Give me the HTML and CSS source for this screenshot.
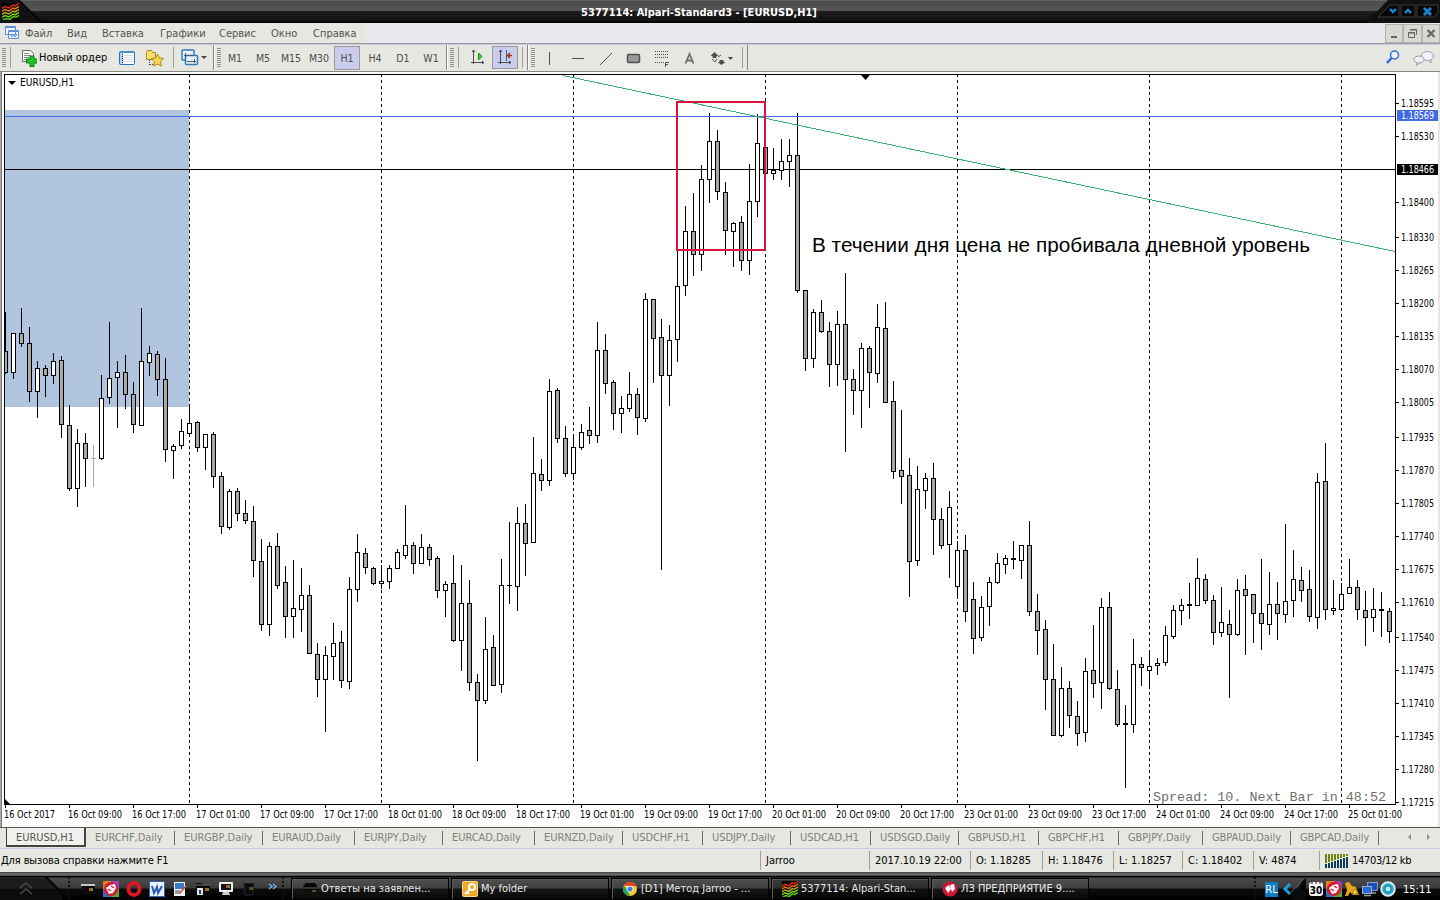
FILE: index.html
```
<!DOCTYPE html>
<html lang="ru">
<head>
    <meta charset="UTF-8">
    <title>5377114: Alpari-Standard3 - [EURUSD,H1]</title>
    <link rel="stylesheet" href="styles.css">
</head>
<body>

    <!-- Общие значки -->
    <svg class="defs">
        <symbol id="logo" viewBox="0 0 17 17">
            <rect width="17" height="17" fill="#060606"/>
            <g fill="none" stroke-width="1.5">
                <path stroke="#e8281e" d="M0 5.500l3-2 4 1.500 4-3 2 .8L17 .5"/>
                <path stroke="#f07818" d="M0 8.500l3-2 4 1.500 4-3 2 .8 4-2.500"/>
                <path stroke="#b8b020" d="M0 11.500l3-2 4 1.500 4-3 2 .8 4-2.500"/>
                <path stroke="#78d818" d="M0 14.500l3-2 4 1.500 4-3 2 .8 4-2.500"/>
                <path stroke="#58c810" d="M1 17l3-1.500 4 1 3-3 3 .8 3-2"/>
            </g>
        </symbol>
        <symbol id="redball" viewBox="0 0 16 16">
            <circle cx="8" cy="8" r="7.500" fill="#d01838"/>
            <path d="M3 7l4-3 2 4-3 4zM8 4l4-1 1 5-3 3z" fill="#fff"/>
        </symbol>
        <symbol id="redsquare" viewBox="0 0 16 16">
            <path d="M0 0h8v8H0z" fill="#e08020"/>
            <path d="M8 0h8v8H8z" fill="#a040b0"/>
            <path d="M0 8h8v8H0z" fill="#3070c8"/>
            <path d="M8 8h8v8H8z" fill="#58a838"/>
            <circle cx="8" cy="8" r="7" fill="#d81830"/>
            <path d="M3 7l4-3 5-1 1 4-3 5-4 1z" fill="#fff"/>
            <path d="M5 8l3 2M8 5l3 2" stroke="#d81830" stroke-width="1.500"/>
        </symbol>
        <symbol id="drive" viewBox="0 0 16 16">
            <path d="M1 5l3-3h9l2 3v4H1z" fill="#080808"/>
            <path d="M1 6h14v2H1z" fill="#333"/>
            <path d="M3 9h12v4H4z" fill="#111"/>
            <path d="M10 9l2 0v2h-2z" fill="#8a3018"/><path d="M12 9l2 0v2h-2z" fill="#38701c"/>
        </symbol>
    </svg>

    <!-- Заголовок окна -->
    <div class="titlebar">
        <svg class="title-left" width="42" height="23">
            <path d="M0 0h19l22 23H0z" fill="#111"/>
            <path d="M19 0l22 22" stroke="#000" stroke-width="1.500"/>
            <use href="#logo" x="2" y="3" width="17" height="17"/>
        </svg>
        <div class="title-text">5377114: Alpari-Standard3 - [EURUSD,H1]</div>
        <svg class="title-right" width="74" height="23">
            <path d="M0 23L22 0h52v23z" fill="#101010"/>
            <path d="M12 17L24 5h9v12zM35 5h14v12H35zM51 5h21v8l-4 4H51z" fill="#050505" stroke="#3c3c3c"/>
            <path d="M24 9l3 3 3-3M39 13l3-3 3 3" fill="none" stroke="#1684c4" stroke-width="2.500"/>
            <path d="M58 8l7 7M65 8l-7 7" stroke="#1684c4" stroke-width="3"/>
        </svg>
    </div>

    <!-- Меню -->
    <div class="menubar">
        <svg class="menu-icon" width="16" height="16" fill="#f4f8ff" stroke="#5a8fdc">
            <path d="M1.500 1.500h10v8h-10zM1.500 2.500h10M4.500 5.500h10v8h-10zM4.500 6.500h10"/>
            <path d="M6 9l2 3 2-3 1 3 2-3" fill="none"/>
        </svg>
        <span class="m1">Файл</span>
        <span class="m2">Вид</span>
        <span class="m3">Вставка</span>
        <span class="m4">Графики</span>
        <span class="m5">Сервис</span>
        <span class="m6">Окно</span>
        <span class="m7">Справка</span>
        <div class="mdi">
            <svg width="16" height="17"><path d="M5 11h6v2H5z" fill="#66665e"/></svg>
            <svg width="17" height="17" fill="none" stroke="#66665e"><path d="M4.500 7.500h6v5h-6zM4 8h7M6.500 5v-.5h6v5H12M6 5h7"/></svg>
            <svg width="16" height="17"><path d="M4.500 5l7 7M11.500 5l-7 7" stroke="#66665e" stroke-width="2.200"/></svg>
        </div>
    </div>

    <!-- Панель инструментов -->
    <div class="toolbar">
        <div class="group group-main">
            <i class="grip"></i><i class="sep"></i>
            <svg class="ic-order" width="16" height="18">
                <path d="M1.500 1.500h8l3 3v8h-11z" fill="#fafafa" stroke="#6c6c6c"/>
                <path d="M3 4.500h5M3 6.500h7M3 8.500h5M3 10.500h3" stroke="#888"/>
                <path d="M9 7h4v3h3.500v4H13v3.500H9V14H5.500v-4H9z" fill="#18c828" stroke="#0a7c14"/>
            </svg>
            <span class="order-text">Новый ордер</span>
            <svg class="ic-list" width="16" height="16">
                <rect x=".5" y="1.500" width="15" height="13" rx="1" fill="#fff" stroke="#2a70b4"/>
                <path d="M1 2h14" stroke="#4a90d0" stroke-width="2"/>
                <path d="M1 3h3v11H1z" fill="#b8d4f0"/>
                <path d="M3.500 4v9" stroke="#222" stroke-dasharray="1 1"/>
                <path d="M5 5.500h9M5 7.500h9M5 9.500h9M5 11.500h9" stroke="#d5dcec"/>
            </svg>
            <svg class="ic-fav" width="19" height="18">
                <path d="M1.500 3.500l1-2h4l1 2h3v7h-9z" fill="#f8e070" stroke="#b08c20"/>
                <path d="M4.500 11v5M5 15.500h4" stroke="#444" stroke-dasharray="1 1"/>
                <path d="M12.500 5l2 4 4 .5-3 3 1 4.500-4-2-4 2 1-4.500-3-3 4-.5z" fill="#fcd850" stroke="#b08418"/>
            </svg>
            <i class="sep"></i>
            <svg class="ic-win" width="18" height="18">
                <rect x="1" y="1" width="12" height="10" rx="1" fill="#e8f2fc" stroke="#3478b8" stroke-width="1.500"/>
                <rect x="4.500" y="6.500" width="12" height="9" rx="1" fill="#e8f2fc" stroke="#3478b8" stroke-width="1.500"/>
                <path d="M3 6.500h9M4.500 4v5M6 12.500h9M13.500 10v4" stroke="#4a5a6a"/>
            </svg>
            <i class="arrow"></i>
        </div>
        <div class="group group-time">
            <i class="grip"></i>
            <b>M1</b><b>M5</b><b>M15</b><b>M30</b><b class="on">H1</b><b>H4</b><b>D1</b><b>W1</b>
        </div>
        <div class="group group-shift">
            <i class="grip"></i><i class="sep"></i>
            <svg class="ic-scroll" width="16" height="17" stroke="#4c4c4c" fill="none">
                <path d="M3.500 1v14M1 13.500h13M2 3l1.500-2L5 3M12 12l2 1.500-2 1.500"/>
                <path d="M8.500 4l3.500 3.500-3.500 3.500z" fill="#3cd83c" stroke="#18841c"/>
            </svg>
            <div class="pressed">
                <svg width="16" height="17" stroke="#4c4c4c" fill="none">
                    <path d="M3.500 1v14M1 13.500h13M2 3l1.500-2L5 3M12 12l2 1.500-2 1.500"/>
                    <path d="M9.500 1v11" stroke="#206a9c"/>
                    <path d="M15 6.500h-4M13 4l-2.500 2.500L13 9" stroke="#a83010" stroke-width="1.500"/>
                </svg>
            </div>
            <i class="sep sep-end"></i>
        </div>
        <div class="group group-draw">
            <i class="grip"></i>
            <svg class="draw" width="205" height="20" viewBox="537 48 205 20" fill="none" stroke="#505050">
                <path d="M549.500 52v13M572 58.500h12M600 65l12-12"/>
                <rect x="627.500" y="54.500" width="12" height="8" rx="1" fill="#9a9a9a" stroke-width="1.500"/>
                <path d="M655 51.500h14M655 54.500h14M655 57.500h14M655 62.500h9" stroke-dasharray="1 1"/>
                <path d="M665.500 67v-4.500h3.500M665 64.500h3" />
                <path d="M685.500 63.500l4-9.500 4 9.500M687 60.500h5" stroke-width="1.800" stroke="#707070"/>
                <path d="M714.500 52l4 4h-2v2h-4v-2h-2zM721.500 65l-4-3h2v-2h4v2h2z" fill="#505050" stroke="none"/>
                <path d="M712 59l3 3 2-3M718 57l3-2"/>
                <path d="M728 57h5l-2.500 3z" fill="#444" stroke="none"/>
            </svg>
            <i class="sep"></i>
        </div>
        <div class="tools-right">
            <svg width="14" height="15"><circle cx="8.500" cy="5" r="4" fill="#f0f6ff" stroke="#3a68d8" stroke-width="1.500"/><path d="M5.500 8l-4.500 5" stroke="#3a68d8" stroke-width="2.500"/></svg>
            <svg width="22" height="16" fill="#f2f2f8" stroke="#9a9aa4"><ellipse cx="14.500" cy="6" rx="6" ry="4.500"/><path d="M16 10l2 3 0-4"/><ellipse cx="6" cy="9.500" rx="5" ry="3.500"/><path d="M4 13l-.5 2.500 3-2.500"/></svg>
        </div>
    </div>

    <!-- График, рисуется в script.js -->
    <svg id="chart" class="chart" width="1440" height="755" viewBox="0 72 1440 755"></svg>

    <!-- Вкладки графиков -->
    <div class="tabs">
        <div id="tabs" class="tab-list"></div>
        <svg class="tab-arrows" width="30" height="12" fill="#8c8c88"><path d="M6 3v6L3 6zM22 3v6l3-3z"/></svg>
    </div>

    <!-- Строка состояния -->
    <div class="status">
        <span class="hint">Для вызова справки нажмите F1</span>
        <span class="s-name">Jarroo</span>
        <span class="s-date">2017.10.19 22:00</span>
        <span class="s-o">O: 1.18285</span>
        <span class="s-h">H: 1.18476</span>
        <span class="s-l">L: 1.18257</span>
        <span class="s-c">C: 1.18402</span>
        <span class="s-v">V: 4874</span>
        <span class="s-net">
            <svg width="24" height="14" fill="none" stroke-width="2">
                <path d="M1 0v9M4 0v8M7 0v7M10 0v6M13 0v5M16 0v4M19 0v3M22 0v2" stroke="#6c8410"/>
                <path d="M1 10v4M4 9v5M7 8v6M10 7v7M13 6v8M16 5v9M19 4v10M22 3v11" stroke="#103c5c"/>
            </svg>
            14703/12 kb
        </span>
    </div>

    <!-- Панель задач -->
    <div class="taskbar">
        <svg class="start" width="62" height="24">
            <path d="M0 1h48l14 14v9H0z" fill="#1c1c1c"/>
            <path d="M0 12h59l3 3v9H0z" fill="#0c0c0c"/>
            <path d="M46 0l16 16" stroke="#050505" stroke-width="2"/>
            <path d="M20 11l6-5 6 5M20 17l6-5 6 5" fill="none" stroke="#4c4c4c" stroke-width="1.500"/>
        </svg>
        <div class="quick">
            <svg width="16" height="16"><path d="M1 3h14v3H1z" fill="#c8c8c8"/><path d="M1 5h14v8H5z" fill="#0c0c0c"/><path d="M9 7h2v3H9z" fill="#c05020"/><path d="M11 7h2v3h-2z" fill="#50a030"/></svg>
            <svg width="16" height="16"><use href="#redsquare"/></svg>
            <svg width="16" height="16"><ellipse cx="8" cy="8" rx="5.500" ry="6" fill="none" stroke="#e01824" stroke-width="4"/></svg>
            <svg width="16" height="16"><rect x=".5" y=".5" width="15" height="15" fill="#e8f0fc" stroke="#3060b0"/><path d="M3 5l2 7 3-6 1 6 4-7" fill="none" stroke="#2858b8" stroke-width="2"/></svg>
            <svg width="16" height="16"><path d="M2 1h11v14H2z" fill="#f0f4fa"/><path d="M3 2h9v6H3z" fill="#3a78c8"/><path d="M3 10h5M3 12h6" stroke="#345"/><path d="M14 5l-6 7" stroke="#e04020" stroke-width="1.500"/></svg>
            <svg width="16" height="16"><path d="M1 2h6l1 2h7v10H1z" fill="#080808"/><path d="M1 4h14" stroke="#777"/><path d="M2 7h6v7H2z" fill="#dde4ec"/><path d="M5 9v4" stroke="#345" stroke-width="2"/><path d="M10 7h2v3h-2z" fill="#c05020"/><path d="M12 7h2v3h-2z" fill="#50a030"/></svg>
            <svg width="16" height="16"><rect x="1" y="1" width="14" height="10" rx="1" fill="#eee"/><path d="M3 3h10v6H3z" fill="#141414"/><path d="M8 4h2v3H8z" fill="#c05020"/><path d="M10 4h2v3h-2z" fill="#50a030"/><path d="M5 11h6l1 3H4z" fill="#ccc"/></svg>
            <svg width="16" height="16"><path d="M3 2h10l-1 12H4z" fill="#0a0a0a" stroke="#262626"/><path d="M5 2l2-1h5" stroke="#555" fill="none"/><path d="M8 6h2v3H8z" fill="#7c3418"/><path d="M10 6h2v3h-2z" fill="#406c20"/></svg>
            <svg class="more" width="10" height="10" fill="none" stroke="#6cb0f0" stroke-width="1.500"><path d="M1 2l3 2.500L1 7M5 2l3 2.500L5 7"/></svg>
        </div>
        <div class="tasks">
            <div class="task"><svg width="16" height="16"><use href="#drive"/></svg><span>Ответы на заявлен...</span></div>
            <div class="task"><svg width="16" height="16"><rect width="16" height="16" rx="2" fill="#f0a828"/><rect x=".5" y=".5" width="15" height="15" rx="2" fill="none" stroke="#f8d888"/><circle cx="10" cy="6" r="3" fill="none" stroke="#fff" stroke-width="2"/><path d="M8 8l-5 5M5 11l2 2" stroke="#fff" stroke-width="2"/></svg><span>My folder</span></div>
            <div class="task"><svg width="16" height="16"><circle cx="8" cy="8" r="7" fill="#f8c820"/><path d="M1.900 4.500A7 7 0 0 1 14.400 5H8z" fill="#e04030"/><path d="M1.900 4.500L5.500 9.500 8 15A7 7 0 0 1 1.900 4.500z" fill="#28a050"/><circle cx="8" cy="8" r="3.300" fill="#fff"/><circle cx="8" cy="8" r="2.600" fill="#4080e8"/></svg><span>[D1] Метод Jarroo - ...</span></div>
            <div class="task active"><svg width="16" height="16"><use href="#logo"/></svg><span>5377114: Alpari-Stan...</span></div>
            <div class="task"><svg width="16" height="16"><use href="#redball"/></svg><span>ЛЗ ПРЕДПРИЯТИЕ 9....</span></div>
        </div>
        <div class="tray">
            <span class="lang">RL</span>
            <svg class="tray-edge" width="28" height="24"><path d="M26 1h2v23H12z" fill="#0a0a0a"/><path d="M27 1L13 15" stroke="#5a5a5a"/><path d="M12 7l-5 5 5 5" fill="none" stroke="#209cdc" stroke-width="3"/></svg>
            <svg width="16" height="16"><rect x="1" y="1" width="14" height="14" rx="3" fill="#f4f4f4"/><path d="M4 1v2M8 1v2M12 1v2" stroke="#111"/><text x="8" y="13" class="cal">30</text></svg>
            <svg width="16" height="16"><use href="#redsquare"/></svg>
            <svg width="16" height="16"><path d="M1 2l4-1 3 4 4 1 3 8H9l-3-3-2 4H1l2-6z" fill="#e8a418"/><path d="M8 13c2-1 1-5 3-5s1 4 3 5z" fill="#fcd850" stroke="#7c5008" stroke-width=".7"/></svg>
            <svg width="16" height="16"><rect x="5.500" y="1.500" width="10" height="8" fill="#1c4cc0" stroke="#8c9cac"/><rect x=".5" y="5.500" width="9" height="7" fill="#2868e0" stroke="#a4b0bc"/><path d="M2 14.500h7M10 12h4" stroke="#8c9cac" stroke-width="1.500"/></svg>
            <svg width="16" height="16"><circle cx="8" cy="8" r="6.800" fill="#28a8c8" stroke="#d8ecf0" stroke-width="2"/><circle cx="8" cy="8" r="3" fill="#b8f0f8" stroke="#107c98"/></svg>
            <span class="clock">15:11</span>
        </div>
    </div>

    <script src="script.js"></script>
</body>
</html>
```
FILE: styles.css
```
body {
    margin: 0;
    width: 1440px;
    height: 900px;
    overflow: hidden;
    display: flex;
    flex-direction: column;
    background: #e6e7e1;
    font-family: "DejaVu Sans Condensed", "DejaVu Sans", sans-serif;
    font-stretch: condensed;
    font-size: 11px;
    color: #000;
    white-space: nowrap;
}

svg {
    display: block;
    flex: none;
}

.defs {
    display: none;
}

/* Заголовок */
.titlebar {
    height: 23px;
    flex: none;
    display: flex;
    justify-content: space-between;
    background: linear-gradient(#777 0, #4d4d4d 1px, #545454 11px, #1d1d1d 11px, #111 21px, #000 22px);
}

.title-text {
    margin-left: -10px;
    font-weight: bold;
    font-size: 11px;
    line-height: 25px;
    color: #fff;
}

/* Меню */
.menubar {
    height: 20px;
    flex: none;
    display: flex;
    align-items: center;
    background: linear-gradient(90deg, #e6e7e1 366px, #e8e8ee 366px);
    border-bottom: 1px solid #9a9a94;
    color: #55554e;
}

.menubar span {
    padding-top: 1px;
}

.menu-icon { margin: 0 4px 0 4px; }
.m1 { width: 42px; margin-left: 1px; }
.m2 { width: 35px; }
.m3 { width: 58px; }
.m4 { width: 59px; }
.m5 { width: 52px; }
.m6 { width: 42px; }
.m7 { width: 50px; }

.mdi {
    margin-left: auto;
    display: flex;
    gap: 2px;
    padding: 1px;
    background: #b4b4b0;
}

.mdi svg {
    background: #d8d8d4;
}

/* Панель инструментов */
.toolbar {
    height: 25px;
    flex: none;
    display: flex;
    border-top: 1px solid #c9c9ee;
    border-bottom: 1px solid #85857e;
    padding-bottom: 1px;
    background: #e6e7e1;
}

.group {
    display: flex;
    align-items: center;
    box-sizing: border-box;
    border-right: 1px solid #85857e;
}

.group-main { width: 214px; }
.group-time { width: 233px; border-left: 1px solid #fff; }
.group-shift { width: 81px; border-left: 1px solid #fff; }
.group-draw { width: 220px; border-left: 1px solid #fff; }

.grip {
    width: 4px;
    height: 19px;
    margin-left: 2px;
    flex: none;
    background: repeating-linear-gradient(#94948e 0 1px, #e6e7e1 1px 2px);
}

.sep {
    width: 1px;
    height: 21px;
    margin-left: 4px;
    flex: none;
    background: #a0a09a;
}

.ic-order { margin-left: 10px; }
.order-text { margin: -1px 12px 0 2px; width: 68px; }
.ic-fav { margin: 0 5px 0 10px; }
.ic-win { margin-left: 7px; }

.arrow {
    margin-left: 2px;
    border: 3px solid transparent;
    border-top-color: #444;
    border-bottom: 0;
}

.group-time b {
    width: 28px;
    text-align: center;
    font-weight: normal;
    font-size: 10.5px;
    line-height: 22px;
    padding-top: 1px;
    color: #4c4c4c;
}

.group-time .grip { margin-right: 0; }

.group-time b.on {
    width: 24px;
    margin: 0 1px;
    padding: 0;
    border: 1px solid #9a9a96;
    background: #cbcbee;
}

.ic-scroll { margin-left: 11px; }

.pressed {
    margin-left: 6px;
    padding: 2px 4px;
    border: 1px solid #9a9a96;
    background: #cbcbee;
}

.draw { margin-left: 2px; }
.group-draw .sep { margin-left: 0; }

.tools-right {
    margin-left: auto;
    display: flex;
    align-items: center;
    gap: 13px;
    padding-right: 5px;
}

/* График */
.chart {
    background: #fff;
}

.chart text {
    font-size: 10.5px;
}

.chart .note {
    font-family: "Liberation Sans", Arial, sans-serif;
    font-size: 20px;
}

.chart .spread {
    font-family: "Liberation Mono", "Courier New", monospace;
    font-size: 13px;
    fill: #707070;
}

/* Вкладки */
.tabs {
    height: 20px;
    flex: none;
    display: flex;
    justify-content: space-between;
    border-top: 1px solid #55554e;
    border-bottom: 1px solid #c9c9ee;
    color: #80807a;
}

.tab-list {
    display: flex;
    padding-left: 6px;
}

.tab {
    box-sizing: border-box;
    line-height: 19px;
    height: 19px;
    padding-left: 9px;
    letter-spacing: -0.05px;
    background: linear-gradient(#6c6c64, #6c6c64) right 3px / 1px 14px no-repeat;
}

.tab.current {
    background: #f0f0ee;
    border: 1px solid #44443e;
    border-width: 0 2px 2px 1px;
    color: #55554e;
}

.tab-arrows {
    margin: 3px 5px 0 0;
}

/* Строка состояния */
.status {
    height: 23px;
    flex: none;
    display: flex;
    align-items: center;
    line-height: 19px;
}

.status span {
    box-sizing: border-box;
    padding-left: 5px;
    border-left: 1px solid #a0a09a;
}

.status .hint {
    width: 760px;
    padding-left: 1px;
    border: 0;
    letter-spacing: -0.13px;
}

.s-name { width: 109px; }
.s-date { width: 101px; }
.s-o { width: 72px; }
.s-h { width: 71px; }
.s-l { width: 69px; }
.s-c { width: 71px; }
.s-v { width: 66px; }

.status .s-date {
    letter-spacing: -0.1px;
}

.status .s-net {
    display: flex;
    align-items: center;
    gap: 3px;
    letter-spacing: -0.3px;
}

/* Панель задач */
.taskbar {
    flex: 1;
    display: flex;
    box-sizing: border-box;
    padding-top: 5px;
    background: linear-gradient(#3c3c3c 0, #707070 2px, #4c4c4c 4px, #000 4px, #000 5px, #4c4c4c 6px, #3a3a3a 16px, #0c0c0c 17px, #000 29px);
    color: #fff;
}

.quick {
    width: 216px;
    box-sizing: border-box;
    display: flex;
    align-items: center;
    gap: 7px;
    padding: 0 0 2px 10px;
    margin: 0 7px 0 6px;
    border-left: 2px dotted #111;
    border-right: 2px dotted #111;
}

.quick .more {
    margin: -4px 0 0 4px;
}

.tasks {
    display: flex;
    gap: 2px;
    padding-top: 1px;
}

.task {
    width: 158px;
    height: 22px;
    box-sizing: border-box;
    display: flex;
    align-items: center;
    gap: 3px;
    padding: 0 0 1px 10px;
    border: 1px solid #000;
    box-shadow: inset 1px 1px #5c5c5c;
    background: linear-gradient(#505050, #404040 9px, #161616 10px, #080808);
    color: #e8e8e8;
}

.task.active {
    background: linear-gradient(#3c3c3c, #2c2c2c 9px, #101010 10px, #060606);
}

.tray {
    flex: 1;
    margin-left: 165px;
    display: flex;
    align-items: center;
    gap: 2px;
    padding: 0 0 2px 9px;
    border-left: 2px dotted #111;
}

.lang {
    width: 13px;
    line-height: 15px;
    background: #0e7cc4;
    text-align: center;
}

.tray-edge { margin: 0 0 0 -2px; }

.cal {
    font-size: 10px;
    font-weight: bold;
    text-anchor: middle;
}

.clock {
    margin-left: 5px;
}
```
FILE: script.js
```
// [high, top, bottom, low, 1 = падение]
const bars = [
    [312,351,373,374,1],[333,333,373,379,0],[308,333,344,347,1],[327,343,392,402,1],[361,368,392,418,0],
    [365,368,376,397,1],[353,361,376,384,0],[356,360,425,438,1],[405,425,489,491,1],[429,443,489,507,0],
    [433,443,459,487,1],[445,458,459,487,2],[375,398,459,460,0],[322,378,398,404,0],[361,372,378,428,0],
    [355,372,395,409,1],[382,394,425,433,1],[308,361,426,426,0],[346,353,363,376,0],[351,354,380,396,1],
    [358,379,450,462,1],[444,446,451,479,0],[419,431,446,449,0],[405,423,434,434,0],[421,422,448,452,1],
    [434,434,448,470,0],[432,434,477,488,1],[472,476,527,534,1],[489,491,528,530,0],[488,491,514,521,1],
    [500,513,521,524,1],[506,521,561,577,1],[539,561,625,631,1],[542,546,625,636,0],[533,546,586,589,1],
    [566,582,617,638,1],[560,608,617,638,0],[568,595,610,632,0],[585,595,654,654,1],[643,654,680,697,1],
    [646,655,680,732,0],[623,643,657,680,0],[631,642,681,688,1],[577,589,682,689,0],[534,552,590,602,0],
    [548,553,568,574,1],[567,568,584,585,1],[565,581,584,589,0],[565,568,582,589,0],[549,552,569,569,0],
    [505,545,556,559,0],[542,545,564,574,1],[534,547,564,564,0],[544,547,560,566,1],[556,558,591,598,1],
    [581,584,591,617,0],[555,583,641,642,1],[565,603,641,671,0],[580,603,683,691,1],[674,682,701,761,1],
    [617,649,701,704,0],[635,647,686,686,1],[559,585,685,693,0],[522,585,586,604,0],[507,523,587,611,0],
    [504,523,544,576,1],[437,473,543,543,0],[459,474,481,491,1],[379,391,481,486,0],[388,390,439,443,1],
    [426,438,474,477,1],[434,447,474,480,0],[424,432,448,450,0],[407,430,436,444,1],[322,350,436,443,0],
    [334,350,384,394,1],[380,382,414,430,1],[396,408,414,433,0],[372,394,409,412,0],[388,394,418,435,1],
    [293,299,419,422,0],[299,299,339,383,1],[319,337,376,570,1],[325,340,376,406,0],[251,286,340,362,0],
    [206,231,286,296,0],[193,231,255,276,1],[165,179,255,271,0],[113,141,180,203,0],[130,141,192,200,1],
    [182,192,231,255,1],[222,223,232,267,0],[216,222,261,271,1],[164,201,261,275,0],[114,143,202,217,0],
    [147,147,174,174,1],[148,170,174,180,0],[139,161,171,180,0],[139,155,162,187,0],[113,155,291,293,1],
    [290,290,359,371,1],[309,312,359,368,0],[300,312,332,333,1],[322,331,365,387,1],[311,324,365,386,0],
    [273,324,380,452,1],[369,379,391,415,1],[343,348,391,428,0],[346,348,373,408,1],[304,327,374,383,0],
    [302,328,403,403,1],[381,401,472,479,1],[410,470,477,504,1],[458,475,562,597,1],[466,489,561,566,0],
    [473,478,491,509,0],[463,478,520,555,1],[508,519,546,549,1],[491,507,545,578,0],[541,550,587,599,0],
    [535,550,612,622,1],[582,599,639,654,1],[596,607,638,641,0],[577,582,607,626,0],[553,563,583,584,0],
    [555,558,565,574,0],[541,558,560,569,0],[545,545,561,579,0],[521,545,612,616,1],[594,611,631,655,1],
    [620,629,680,710,1],[644,679,736,736,1],[667,688,736,737,0],[681,688,716,728,1],[701,716,734,746,1],
    [658,671,733,742,0],[625,670,684,698,1],[598,607,683,709,0],[592,607,689,690,1],[670,689,725,727,1],
    [705,723,725,788,0],[639,664,725,733,0],[657,664,668,686,1],[650,666,671,687,0],[658,663,666,675,0],
    [626,635,663,666,0],[605,610,637,639,0],[599,605,611,625,0],[583,604,606,619,0],[558,578,606,606,0],
    [574,579,601,604,1],[595,600,633,645,1],[587,622,633,637,0],[610,624,635,698,1],[579,590,635,636,0],
    [575,589,596,655,1],[594,594,614,643,1],[559,613,624,650,1],[572,604,625,635,0],[582,604,614,640,1],
    [524,601,615,623,0],[550,579,601,617,0],[567,580,591,602,1],[570,589,617,622,1],[473,482,618,629,0],
    [443,481,610,620,1],[580,608,611,615,0],[583,594,610,610,0],[559,587,594,594,0],[580,587,610,620,1],
    [591,610,618,646,1],[588,609,618,632,0],[592,609,611,637,0],[608,611,632,643,1]
];

const dates = ['16 Oct 2017', '16 Oct 09:00', '16 Oct 17:00', '17 Oct 01:00', '17 Oct 09:00', '17 Oct 17:00',
    '18 Oct 01:00', '18 Oct 09:00', '18 Oct 17:00', '19 Oct 01:00', '19 Oct 09:00', '19 Oct 17:00',
    '20 Oct 01:00', '20 Oct 09:00', '20 Oct 17:00', '23 Oct 01:00', '23 Oct 09:00', '23 Oct 17:00',
    '24 Oct 01:00', '24 Oct 09:00', '24 Oct 17:00', '25 Oct 01:00'];

const prices = [['1.18595', 103], ['1.18530', 136], ['1.18400', 202], ['1.18330', 237], ['1.18265', 270],
    ['1.18200', 303], ['1.18135', 336], ['1.18070', 369], ['1.18005', 402], ['1.17935', 437], ['1.17870', 470],
    ['1.17805', 503], ['1.17740', 536], ['1.17675', 569], ['1.17610', 602], ['1.17540', 637], ['1.17475', 670],
    ['1.17410', 703], ['1.17345', 736], ['1.17280', 769], ['1.17215', 802]];

const rect = (x, y, w, h, fill) => `<rect x="${x}" y="${y}" width="${w}" height="${h}" fill="${fill}"/>`;
const label = (x, y, w, text, attrs = '') => `<text x="${x}" y="${y}" textLength="${w}" lengthAdjust="spacingAndGlyphs" ${attrs}>${text}</text>`;

let out = '';

// рамка окна и дневной диапазон
out += rect(0, 72, 1, 755, '#aaa') + rect(1, 72, 1, 755, '#777') + rect(1438, 72, 2, 755, '#e6e7e1');
out += rect(5, 110, 184, 297, '#b0c4de');

// разделители дней
for (let x = 189; x < 1395; x += 192) {
    out += `<path d="M${x + .5} 74V804" stroke="#000" stroke-dasharray="3 3"/>`;
}

out += rect(5, 169, 1391, 1, '#000');

bars.forEach(([high, top, bottom, low, type], i) => {
    const x = 5 + i * 8;
    const color = type === 2 ? '#a9a9a9' : '#000';
    out += rect(x, high, 1, low - high, color);
    // первый бар обрезан рамкой
    const left = i === 0 ? x : x - 2;
    out += rect(left, top, x + 3 - left, bottom - top, color);
    if (bottom - top > 2) {
        out += rect(left === x ? x : x - 1, top + 1, left === x ? 2 : 3, bottom - top - 2, type ? '#a9a9a9' : '#fff');
    }
});

// линии и разметка
out += rect(5, 116, 1391, 1, '#4169e1');
out += '<path d="M563 75.500L1395 251.500" stroke="#3cb371" shape-rendering="crispEdges"/>';
out += '<rect x="677" y="102" width="88" height="148" fill="none" stroke="#dc143c" stroke-width="2"/>';
out += label(812, 252, 498, 'В течении дня цена не пробивала дневной уровень', 'class="note"');
out += label(1153, 801, 233, 'Spread: 10. Next Bar in 48:52', 'class="spread"');

// оси
out += rect(4, 74, 1392, 1, '#000') + rect(4, 74, 1, 731, '#000') + rect(1395, 74, 1, 731, '#000') + rect(4, 804, 1392, 1, '#000');
out += '<path d="M8 81h8l-4 4zM861 75h9l-4.500 5zM5 799v6h6z"/>';
out += label(20, 86, 54, 'EURUSD,H1');

dates.forEach((d, i) => {
    out += rect(5 + i * 64, 805, 1, 3, '#000');
    out += label(4 + i * 64, 818, i ? 54 : 51, d);
});

prices.forEach(([text, y]) => {
    out += rect(1396, y, 3, 1, '#000') + label(1401, y + 4, 33, text);
});

out += rect(1397, 110, 41, 11, '#4169e1') + label(1401, 119, 33, '1.18569', 'fill="#fff"');
out += rect(1397, 164, 41, 11, '#000') + label(1401, 173, 33, '1.18466', 'fill="#fff"');

document.getElementById('chart').innerHTML = out;

// вкладки: название и правая граница
const tabs = [['EURUSD,H1', 86], ['EURCHF,Daily', 175], ['EURGBP,Daily', 263], ['EURAUD,Daily', 355], ['EURJPY,Daily', 443],
    ['EURCAD,Daily', 535], ['EURNZD,Daily', 623], ['USDCHF,H1', 703], ['USDJPY,Daily', 791], ['USDCAD,H1', 871],
    ['USDSGD,Daily', 959], ['GBPUSD,H1', 1039], ['GBPCHF,H1', 1119], ['GBPJPY,Daily', 1203], ['GBPAUD,Daily', 1291], ['GBPCAD,Daily', 1379]];

let edge = 6;
document.getElementById('tabs').innerHTML = tabs.map(([name, right], i) => {
    const width = right - edge;
    edge = right;
    return `<div class="tab${i ? '' : ' current'}" style="width:${width}px">${name}</div>`;
}).join('');
```
